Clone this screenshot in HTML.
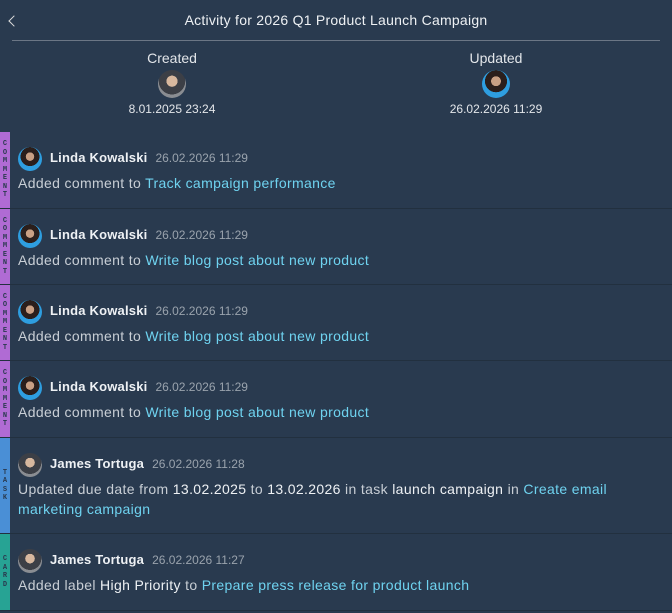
<!DOCTYPE html>
<html><head><style>
*{margin:0;padding:0;box-sizing:border-box}
body{width:672px;height:613px;background:#293a4f;font-family:"Liberation Sans",sans-serif;color:#d4d9df;position:relative;overflow:hidden}
.hdr{position:absolute;top:12px;left:0;width:672px;text-align:center;font-size:14px;color:#eef1f4;letter-spacing:0.25px}
.back{position:absolute;left:10px;top:17px;width:8px;height:8px;border-left:1.5px solid #ddd;border-bottom:1.5px solid #ddd;transform:rotate(45deg)}
.line{position:absolute;top:40px;left:12px;width:648px;height:1px;background:#6b7685}
.meta{position:absolute;top:50px;width:140px;text-align:center;font-size:14px;color:#e3e6ea}
.meta .d{font-size:12px;margin-top:4px}
.av{width:28px;height:28px;border-radius:50%;margin:4px auto 0;background:radial-gradient(circle at 50% 40%,#d8b89e 0 25%,#3c3f46 26% 60%,#8a8d92 61%)}
.av.f{background:radial-gradient(circle at 50% 40%,#c9a084 0 22%,#2b1f1c 23% 50%,#2e9ee0 51%)}
.row{position:absolute;left:0;width:672px;border-bottom:1px solid #22303f}
.stripe{position:absolute;left:0;top:0;bottom:0;width:10px;font-size:7px;font-weight:bold;color:#2a3a4f;text-align:center;line-height:8.5px;display:flex;flex-direction:column;justify-content:center;font-family:"Liberation Mono",monospace}
.ua{position:absolute;left:18px;top:15px;width:24px;height:24px;border-radius:50%;background:radial-gradient(circle at 50% 40%,#c9a084 0 22%,#2b1f1c 23% 50%,#2e9ee0 51%)}
.ua.m{background:radial-gradient(circle at 50% 40%,#d8b89e 0 25%,#3c3f46 26% 60%,#8a8d92 61%)}
.nm{position:absolute;left:50px;top:18px;font-size:13px;font-weight:bold;color:#eef1f4;letter-spacing:0.2px}
.nm span{font-weight:normal;color:#9aa3ad;font-size:12px;margin-left:8px;letter-spacing:0}
.tx{position:absolute;left:18px;top:41px;font-size:14px;line-height:20px;color:#c8ced5;width:625px;letter-spacing:0.35px}
.tx a{color:#6fd3f0}
.tx b{color:#eef1f4;font-weight:normal}
</style></head><body>
<div class="back"></div>
<div class="hdr">Activity for 2026 Q1 Product Launch Campaign</div>
<div class="line"></div>
<div class="meta" style="left:102px">Created<div class="av"></div><div class="d">8.01.2025 23:24</div></div>
<div class="meta" style="left:426px">Updated<div class="av f"></div><div class="d">26.02.2026 11:29</div></div>

<div class="row" style="top:132px;height:77px"><div class="stripe" style="background:#b06bd4">C O M M E N T</div><div class="ua"></div><div class="nm">Linda Kowalski<span>26.02.2026 11:29</span></div><div class="tx">Added comment to <a>Track campaign performance</a></div></div>
<div class="row" style="top:209px;height:76px"><div class="stripe" style="background:#b06bd4">C O M M E N T</div><div class="ua"></div><div class="nm">Linda Kowalski<span>26.02.2026 11:29</span></div><div class="tx">Added comment to <a>Write blog post about new product</a></div></div>
<div class="row" style="top:285px;height:76px"><div class="stripe" style="background:#b06bd4">C O M M E N T</div><div class="ua"></div><div class="nm">Linda Kowalski<span>26.02.2026 11:29</span></div><div class="tx">Added comment to <a>Write blog post about new product</a></div></div>
<div class="row" style="top:361px;height:77px"><div class="stripe" style="background:#b06bd4">C O M M E N T</div><div class="ua"></div><div class="nm">Linda Kowalski<span>26.02.2026 11:29</span></div><div class="tx">Added comment to <a>Write blog post about new product</a></div></div>
<div class="row" style="top:438px;height:96px"><div class="stripe" style="background:#4a8fd6">T A S K</div><div class="ua m"></div><div class="nm">James Tortuga<span>26.02.2026 11:28</span></div><div class="tx">Updated due date from <b>13.02.2025</b> to <b>13.02.2026</b> in task <b>launch campaign</b> in <a>Create email<br>marketing campaign</a></div></div>
<div class="row" style="top:534px;height:77px"><div class="stripe" style="background:#27a394">C A R D</div><div class="ua m"></div><div class="nm">James Tortuga<span>26.02.2026 11:27</span></div><div class="tx">Added label <b>High Priority</b> to <a>Prepare press release for product launch</a></div></div>
</body></html>
